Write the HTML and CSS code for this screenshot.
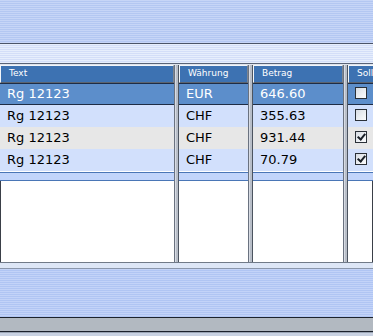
FILE: index.html
```html
<!DOCTYPE html>
<html lang="de">
<head>
    <meta charset="UTF-8">
    <title>Rechnungen</title>
    <link rel="stylesheet" href="styles.css">
</head>
<body>
    <div class="top"></div>
    <div class="sub"></div>
    <div class="grid">
        <div class="col col-text">
            <div class="head">Text</div>
            <div class="cell sel">Rg 12123</div>
            <div class="cell">Rg 12123</div>
            <div class="cell alt">Rg 12123</div>
            <div class="cell">Rg 12123</div>
            <div class="foot"></div>
            <div class="fill"></div>
        </div>
        <div class="sep"></div>
        <div class="col col-cur">
            <div class="head">Währung</div>
            <div class="cell sel">EUR</div>
            <div class="cell">CHF</div>
            <div class="cell alt">CHF</div>
            <div class="cell">CHF</div>
            <div class="foot"></div>
            <div class="fill"></div>
        </div>
        <div class="sep"></div>
        <div class="col col-amt">
            <div class="head">Betrag</div>
            <div class="cell sel">646.60</div>
            <div class="cell">355.63</div>
            <div class="cell alt">931.44</div>
            <div class="cell">70.79</div>
            <div class="foot"></div>
            <div class="fill"></div>
        </div>
        <div class="sep"></div>
        <div class="col col-sol">
            <div class="head">Soll</div>
            <div class="cell sel"><span class="box"></span></div>
            <div class="cell"><span class="box"></span></div>
            <div class="cell alt"><span class="box checked"></span></div>
            <div class="cell"><span class="box checked"></span></div>
            <div class="foot"></div>
            <div class="fill"></div>
        </div>
    </div>
    <div class="bottom">
        <div class="strip"></div>
        <div class="stripes"></div>
        <div class="status"></div>
        <div class="edge"></div>
    </div>
</body>
</html>
```

FILE: styles.css
```css
* {
    margin: 0;
    padding: 0;
    box-sizing: border-box;
}
body {
    width: 373px;
    height: 336px;
    overflow: hidden;
    background: #fff;
    font-family: "DejaVu Sans", Verdana, sans-serif;
}
.top {
    height: 44px;
    border-bottom: 1px solid #4a5468;
    background: repeating-linear-gradient(to bottom, #c6d5f7 0 1px, #b3c7f2 1px 2px);
}
.sub {
    height: 20px;
    border-bottom: 1px solid #5a6478;
    background: repeating-linear-gradient(to bottom, #e6eefc 0 1px, #d3def8 1px 2px);
}
.grid {
    display: flex;
    height: 198px;
    padding-top: 1px;
    background: #dfe4ec;
}
.col {
    display: flex;
    flex-direction: column;
    flex-shrink: 0;
}
.col-text { width: 174px; }
.col-cur { width: 69px; }
.col-amt { width: 90px; }
.col-sol {
    flex: 1;
    min-width: 0;
    overflow: hidden;
}
.col-sol .head {
    width: 60px;
    border-right: 0;
}
.sep {
    width: 5px;
    flex-shrink: 0;
    background: linear-gradient(to right, #6a7280 0 1px, #d8dce4 1px 2px, #b8bec8 2px 4px, #4c5460 4px 5px);
}
.head {
    height: 18px;
    padding-left: 8px;
    border: 1px solid;
    border-color: #f2f5f9 #7c8490 #5c6470 #f2f5f9;
    background: #3d72b2;
    color: #fff;
    font-size: 9px;
    line-height: 15px;
    white-space: nowrap;
}
.cell {
    height: 22px;
    padding-left: 7px;
    background: #d2e0fc;
    color: #000;
    font-size: 13px;
    line-height: 22px;
    white-space: nowrap;
}
.cell.alt {
    background: #e7e7e7;
}
.cell.sel {
    background: #5c8ecb;
    color: #fff;
    border-top: 1px solid #1e2c44;
    border-bottom: 1px solid #1e2c44;
    line-height: 20px;
}
.foot {
    height: 10px;
    border-top: 1px solid #fff;
    border-bottom: 1px solid #4a76b6;
    background: linear-gradient(to bottom, #4a76b6 0 1px, #c2d5fb 1px);
}
.fill {
    flex: 1;
    background: #fff;
}
.col-text .fill {
    border-left: 1px solid #3a3f48;
}
.col-sol .fill {
    border-right: 1px solid #3a3f48;
}
.box {
    display: inline-block;
    width: 12px;
    height: 12px;
    vertical-align: middle;
    margin-top: -3px;
    border: 1px solid #2a3038;
    background: linear-gradient(to bottom right, #d8dde4, #fbfcfd);
    position: relative;
}
.box.checked::after {
    content: "";
    position: absolute;
    left: 3px;
    top: 0;
    width: 3px;
    height: 6px;
    border: solid #1a2028;
    border-width: 0 2px 2px 0;
    transform: rotate(40deg);
}
.bottom {
    display: flex;
    flex-direction: column;
}
.strip {
    height: 7px;
    border-top: 1px solid #707a88;
    border-bottom: 1px solid #8a96aa;
    background: #dde6f6;
}
.stripes {
    height: 48px;
    background: repeating-linear-gradient(to bottom, #c3d3f8 0 1px, #b0c5f3 1px 2px);
}
.status {
    height: 15px;
    border-top: 1px solid #1c222c;
    border-bottom: 1px solid #1c222c;
    background: #b2b9c1;
}
.edge {
    height: 5px;
    background: linear-gradient(to bottom, #9aa4b4 0 1px, #c9d2e2 1px);
}
```
